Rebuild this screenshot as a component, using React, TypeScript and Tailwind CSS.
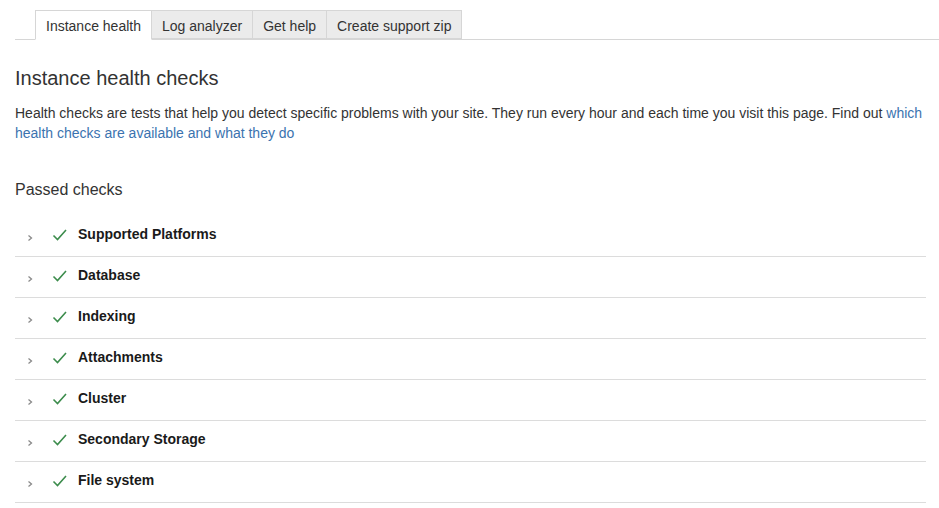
const tabs = ["Instance health", "Log analyzer", "Get help", "Create support zip"];

const checks = [
  "Supported Platforms",
  "Database",
  "Indexing",
  "Attachments",
  "Cluster",
  "Secondary Storage",
  "File system",
];

function Chevron() {
  return (
    <svg width="8" height="10" viewBox="0 0 8 10" className="shrink-0">
      <path d="M2.5 2.5 L5.5 5 L2.5 7.5" fill="none" stroke="#8a8a8a" strokeWidth="1.3" />
    </svg>
  );
}

function Check() {
  return (
    <svg width="16" height="14" viewBox="0 0 16 14" className="shrink-0">
      <path d="M1.5 7.5 L5.5 11.5 L14 2" fill="none" stroke="#3c8c4c" strokeWidth="1.6" />
    </svg>
  );
}

export default function App() {
  return (
    <div
      className="min-h-[508px] bg-white pl-[15px] pt-[10px] text-[#333]"
      style={{ fontFamily: '"Liberation Sans", Arial, sans-serif' }}
    >
      {/* tab strip */}
      <div className="flex border-b border-[#d6d6d6] pl-[20px]">
        {tabs.map((t, i) => (
          <div
            key={t}
            className={
              i === 0
                ? "-mb-px h-[30px] border border-b-white border-[#d6d6d6] bg-white px-[10px] pt-[5px] text-[14px] text-[#333]"
                : "h-[29px] border border-l-0 border-[#d6d6d6] bg-[#ebebeb] px-[10px] pt-[5px] text-[14px] text-[#333]"
            }
          >
            {t}
          </div>
        ))}
      </div>

      <div className="pr-[13px]">
        <h1 className="mt-[26px] text-[20px] leading-[24px] text-[#333]">Instance health checks</h1>
        <p className="mt-[13px] text-[14px] leading-[20px] text-[#333]">
          Health checks are tests that help you detect specific problems with your site. They run every hour and
          each time you visit this page. Find out{" "}
          <a className="text-[#3b73af]">which health checks are available and what they do</a>
        </p>

        <h2 className="mt-[37px] text-[16px] leading-[20px] text-[#333]">Passed checks</h2>

        <div className="mt-[16px]">
          {checks.map((c) => (
            <div key={c} className="flex h-[41px] items-start border-b border-[#dcdcdc] pl-[11px] pt-[8px]">
              <div className="mt-[9px]">
                <Chevron />
              </div>
              <div className="ml-[18px] mt-[4px]">
                <Check />
              </div>
              <span className="ml-[10px] text-[14px] leading-[20px] font-bold text-[#1a1a1a]">{c}</span>
            </div>
          ))}
        </div>
      </div>
    </div>
  );
}
